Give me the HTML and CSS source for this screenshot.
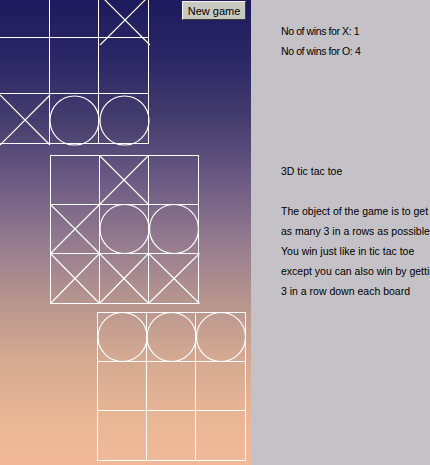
FILE: index.html
```html
<!DOCTYPE html>
<html>
<head>
<meta charset="utf-8">
<title>3D tic tac toe</title>
<link rel="stylesheet" href="styles.css">
</head>
<body>
<div class="page">
  <div class="board-pane">
    <!-- the three boards, drawn like the old applet canvas -->
    <svg class="boards" width="251" height="465" viewBox="0 0 251 465">
      <g class="grid">
        <path d="M49.5 0V143.5M98.5 0V143.5M148.5 0V143.5M0 37.5H148.5M0 93.5H148.5M0 143.5H148.5"/>
        <path d="M50.5 155.5H198.5V303.5H50.5ZM99.5 155.5V303.5M148.5 155.5V303.5M50.5 204.5H198.5M50.5 253.5H198.5"/>
        <path d="M97.5 312.5H245.5V460.5H97.5ZM146.5 312.5V460.5M195.5 312.5V460.5M97.5 361.5H245.5M97.5 410.5H245.5"/>
      </g>
      <g class="marks">
        <!-- board 1 -->
        <path d="M100 -5L150 45M150 -5L100 45"/>
        <path d="M0 95L50 145M50 95L0 145"/>
        <circle cx="74.5" cy="120.5" r="24.5"/>
        <circle cx="124.5" cy="120.5" r="24.5"/>
        <!-- board 2 -->
        <path d="M99.5 155.5L148.5 204.5M148.5 155.5L99.5 204.5"/>
        <path d="M50.5 204.5L99.5 253.5M99.5 204.5L50.5 253.5"/>
        <circle cx="124.5" cy="229" r="24.5"/>
        <circle cx="174" cy="229" r="24.5"/>
        <path d="M50.5 253.5L99.5 303.5M99.5 253.5L50.5 303.5"/>
        <path d="M99.5 253.5L148.5 303.5M148.5 253.5L99.5 303.5"/>
        <path d="M148.5 253.5L199.5 303.5M199.5 253.5L148.5 303.5"/>
        <!-- board 3 -->
        <circle cx="122.5" cy="337" r="24.5"/>
        <circle cx="171.5" cy="337" r="24.5"/>
        <circle cx="221" cy="337" r="24.5"/>
      </g>
    </svg>
    <button class="new-game">New game</button>
  </div>
  <div class="info">
    <div class="score">No of wins for X: 1</div>
    <div class="score">No of wins for O: 4</div>
    <div class="title">3D tic tac toe</div>
    <div class="rules">
      <div>The object of the game is to get</div>
      <div>as many 3 in a rows as possible</div>
      <div>You win just like in tic tac toe</div>
      <div>except you can also win by getting</div>
      <div>3 in a row down each board</div>
    </div>
  </div>
</div>
</body>
</html>
```

FILE: styles.css
```css
body{
margin:0;
font-family:"Liberation Sans", Arial, sans-serif;
font-size:11px;
color:#000;
}
.page{
display:flex;
width:430px;
height:465px;
overflow:hidden;
}
.board-pane{
position:relative;
width:251px;
height:465px;
flex:none;
background:linear-gradient(to bottom,#1d1a5d 0px,#2c2866 60px,#453d6e 120px,#6b5a83 180px,#937a8e 240px,#b6948e 300px,#d5aa92 360px,#e9b796 420px,#f1b99a 465px);
}
.boards{
display:block;
}
.grid path{
fill:none;
stroke:#fff;
stroke-width:1;
shape-rendering:crispEdges;
}
.marks path,
.marks circle{
fill:none;
stroke:#fff;
stroke-width:1.2;
}
.new-game{
position:absolute;
left:182px;
top:1px;
width:64px;
height:19px;
padding:0;
margin:0;
font-family:"Liberation Sans", Arial, sans-serif;
font-size:11px;
color:#000;
background:#c9c9c1;
border:1px solid;
border-color:#f4f4f0 #3c3c3c #3c3c3c #f4f4f0;
}
.info{
flex:1;
background:#c4c2c6;
padding:21px 0 0 30px;
white-space:nowrap;
overflow:hidden;
line-height:20px;
font-size:10.5px;
}
.score{
letter-spacing:-0.4px;
}
.title{
margin-top:100px;
}
.rules{
margin-top:20px;
}
```
